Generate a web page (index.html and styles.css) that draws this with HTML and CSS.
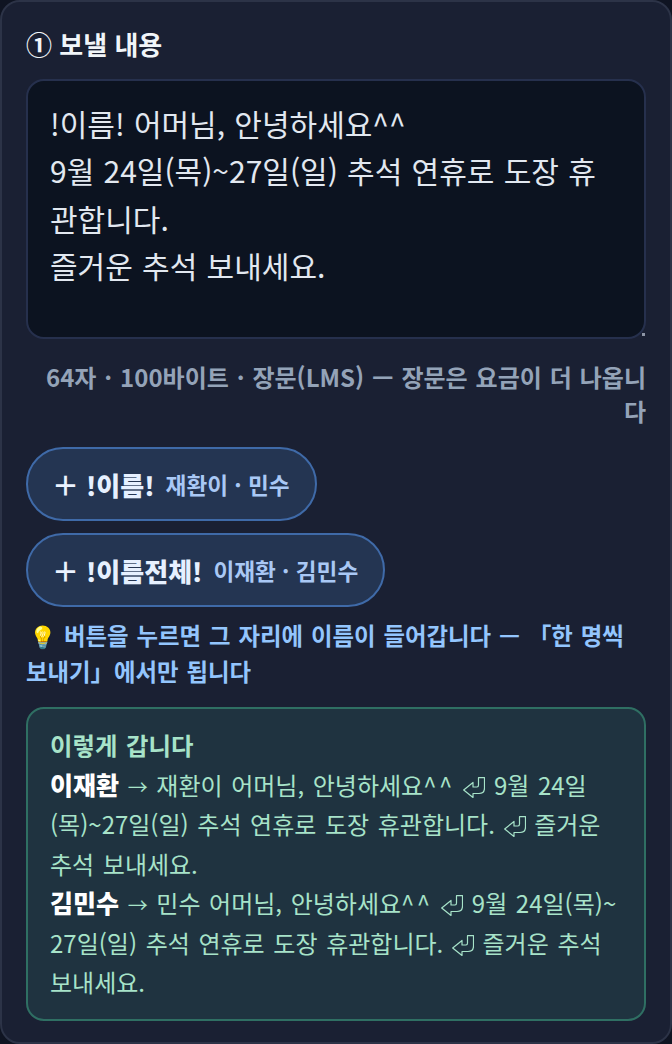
FILE: index.html
```html
<!DOCTYPE html>
<html lang="ko">
<head>
<meta charset="utf-8">
<title>보낼 내용</title>
<link rel="stylesheet" href="styles.css">
</head>
<body>
<svg class="defs" width="0" height="0" aria-hidden="true">
  <symbol id="ret" viewBox="0 0 22 21">
    <path d="M.7 13 10 5.5V10h4q1.5 0 1.5-2V.7h6V11q0 5.500-5.500 5.500h-6v4z" fill="none" stroke="currentColor" stroke-width="1.200" stroke-linejoin="round"/>
  </symbol>
</svg>
<section class="card">
  <h2 class="title">① 보낼 내용</h2>
  <div class="message-wrap">
    <textarea class="message" spellcheck="false">!이름! 어머님, 안녕하세요^^
9월 24일(목)~27일(일) 추석 연휴로 도장 휴관합니다.
즐거운 추석 보내세요.</textarea>
  </div>
  <p class="count">64자 · 100바이트 · 장문(LMS) — 장문은 요금이 더 나옵니다</p>
  <div class="chips">
    <button class="chip"><span class="plus">＋</span><b>!이름!</b><span class="eg">재환이 · 민수</span></button>
    <button class="chip"><span class="plus">＋</span><b>!이름전체!</b><span class="eg">이재환 · 김민수</span></button>
  </div>
  <p class="hint"><span class="bulb">💡</span> 버튼을 누르면 그 자리에 이름이 들어갑니다 — 「한 명씩 보내기」에서만 됩니다</p>
  <div class="preview">
    <div class="preview-title">이렇게 갑니다</div>
    <div><b>이재환</b> <span class="arrow">→</span> 재환이 어머님, 안녕하세요<span class="caret">^^</span> <svg class="ret"><use href="#ret"/></svg> 9월 24일(목)~27일(일) 추석 연휴로 도장 휴관합니다. <svg class="ret"><use href="#ret"/></svg> 즐거운 추석 보내세요.</div>
    <div><b>김민수</b> <span class="arrow">→</span> 민수 어머님, 안녕하세요<span class="caret">^^</span> <svg class="ret"><use href="#ret"/></svg> 9월 24일(목)~<wbr>27일(일) 추석 연휴로 도장 휴관합니다. <svg class="ret"><use href="#ret"/></svg> 즐거운 추석 보내세요.</div>
  </div>
</section>
</body>
</html>
```
FILE: styles.css
```css
* { box-sizing: border-box; }
html, body { margin: 0; background: #0f1422; }
body {
  font-family: "Noto Sans CJK KR", "Noto Sans", sans-serif;
  width: 672px;
  height: 1044px;
  overflow: hidden;
}
.defs { position: absolute; }
.card {
  height: 1044px;
  padding: 24px 24px 0;
  background: #1a2033;
  border: 2px solid #2c3347;
  border-radius: 20px;
}
.title {
  margin: -1px 0 16px;
  font-size: 26px;
  line-height: 38px;
  font-weight: 700;
  color: #f1f5f9;
}
.message-wrap { position: relative; }
.message-wrap::after {
  content: "";
  position: absolute;
  right: 1px;
  bottom: 3px;
  width: 3px;
  height: 3px;
  background: #8d95a6;
}
.message {
  display: block;
  width: 100%;
  height: 260px;
  padding: 19px 22px;
  background: #0c1320;
  border: 2px solid #26304d;
  border-radius: 18px;
  color: #e2e8f0;
  font: 400 30px/47.300px "Noto Sans CJK KR", "Noto Sans", sans-serif;
  word-spacing: 0.03em;
  outline: none;
  resize: none;
  overflow: hidden;
}
.count {
  margin: 21px 0 0;
  text-align: right;
  font-size: 24px;
  line-height: 34px;
  font-weight: 700;
  color: #94a3b8;
  word-spacing: 0.05em;
}
.chips {
  display: flex;
  flex-direction: column;
  align-items: flex-start;
  gap: 12px;
  margin-top: 19px;
}
.chip {
  display: flex;
  align-items: center;
  height: 74px;
  padding: 0 25px 0 26px;
  background: #243552;
  border: 2px solid #3f6aa8;
  border-radius: 37px;
  color: #e2e8f0;
  font-family: inherit;
  white-space: nowrap;
}
.plus { font-size: 27px; font-weight: 700; color: #eaf2ff; margin-right: 7px; margin-left: -2px; }
.chip b { font-size: 26px; font-weight: 900; color: #e6f0ff; }
.eg { font-size: 22.600px; font-weight: 700; color: #a9c8f5; margin-left: 11px; }
.hint {
  margin: 10px 0 0;
  font-size: 23.400px;
  line-height: 36px;
  font-weight: 700;
  color: #93c5fd;
  word-spacing: 0.06em;
}
.bulb { font-family: "DejaVu Sans", sans-serif; font-size: 22px; line-height: 1; font-weight: 400; margin-left: 3px; }
.preview {
  margin-top: 18px;
  height: 314px;
  padding: 16px 22px;
  background: #1f3340;
  border: 2px solid #2f6f63;
  border-radius: 18px;
  font-size: 24px;
  line-height: 39.500px;
  color: #a7e3c9;
  word-spacing: 0.08em;
}
.preview b { color: #fff; font-size: 25px; line-height: 1; font-weight: 900; }
.preview-title { font-size: 24.400px; font-weight: 700; }
.arrow { font-size: 20px; line-height: 1; }
.caret { letter-spacing: 0.1em; }
.ret { width: 22px; height: 21px; margin: -4px 0; vertical-align: 1px; }
```
